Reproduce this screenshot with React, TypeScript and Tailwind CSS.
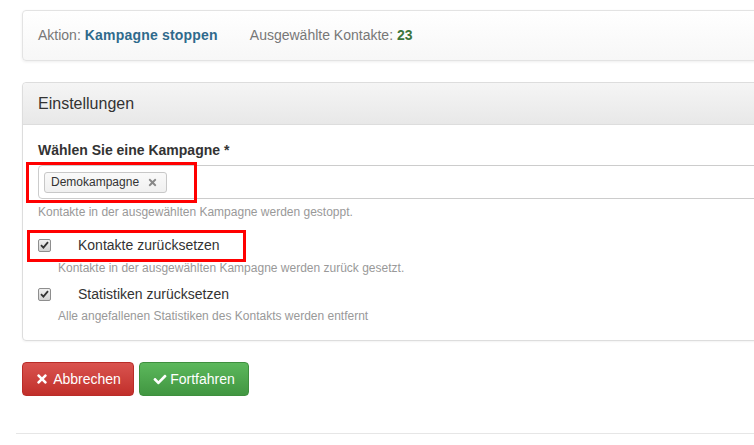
import { FaCheck, FaTimes } from "react-icons/fa";

const Checkbox: React.FC = () => (
  <span className="flex items-center justify-center w-[13px] h-[13px] rounded-[2px] border border-[#8e8e8e] bg-linear-to-b from-[#f0f0f0] to-[#d2d2d2]">
    <svg width="9" height="8" viewBox="0 0 9 8">
      <path d="M1 4.2 L3.4 6.6 L8 1.2" fill="none" stroke="#333" strokeWidth="1.8" />
    </svg>
  </span>
);

export default function App() {
  return (
    <div className="relative w-[754px] h-[445px] overflow-hidden bg-white text-[14px] text-[#333] font-['Liberation_Sans',Arial,sans-serif]">
      <div className="pt-[10px] pl-[22px] w-[1000px]">
        {/* info well */}
        <div className="h-[51px] flex items-center px-[15px] border border-[#e3e3e3] rounded-[4px] bg-linear-to-b from-white to-[#f7f7f7] shadow-[0_1px_3px_rgba(0,0,0,0.07)]">
          <span className="text-[#777]">
            Aktion: <b className="text-[#2f6a8c] tracking-[0.2px]">Kampagne stoppen</b>
          </span>
          <span className="ml-[32px] text-[#777]">
            Ausgewählte Kontakte: <b className="text-[#3c763d]">23</b>
          </span>
        </div>

        {/* settings panel */}
        <div className="mt-[21px] border border-[#ddd] rounded-[4px] shadow-[0_1px_2px_rgba(0,0,0,0.05)]">
          <div className="h-[42px] flex items-center px-[15px] text-[16px] border-b border-[#ddd] rounded-t-[4px] bg-linear-to-b from-[#f5f5f5] to-[#e8e8e8]">
            Einstellungen
          </div>
          <div className="px-[15px] pt-[15px] pb-[15px]">
            <div className="font-bold leading-[20px] mb-[5px]">Wählen Sie eine Kampagne *</div>
            <div className="h-[34px] border border-[#ccc] rounded-[4px] pl-[5px] pt-[5px]">
              <span className="inline-flex items-center h-[21px] pl-[6px] pr-[8px] gap-[8px] border border-[#c8c8c8] rounded-[3px] bg-linear-to-b from-[#fafafa] to-[#f0f0f0] text-[12px] text-[#333]">
                Demokampagne
                <FaTimes className="text-[#888] w-[11px] h-[11px]" />
              </span>
            </div>
            <div className="mt-[5px] text-[12px] leading-[17px] text-[#999]">
              Kontakte in der ausgewählten Kampagne werden gestoppt.
            </div>

            <div className="mt-[14px] flex items-center h-[20px]">
              <Checkbox />
              <span className="ml-[27px]">Kontakte zurücksetzen</span>
            </div>
            <div className="mt-[5px] pl-[20px] text-[12px] leading-[17px] text-[#999]">
              Kontakte in der ausgewählten Kampagne werden zurück gesetzt.
            </div>

            <div className="mt-[7px] flex items-center h-[20px]">
              <Checkbox />
              <span className="ml-[27px]">Statistiken zurücksetzen</span>
            </div>
            <div className="mt-[4px] pl-[20px] text-[12px] leading-[17px] text-[#999]">
              Alle angefallenen Statistiken des Kontakts werden entfernt
            </div>
          </div>
        </div>

        {/* actions */}
        <div className="mt-[21px] flex gap-[5px]">
          <button className="h-[34px] w-[112px] flex items-center justify-center gap-[4px] rounded-[4px] border border-[#b92c28] bg-linear-to-b from-[#d9534f] to-[#c12e2a] text-white text-[14px]">
            <FaTimes className="w-[14px] h-[14px]" />
            Abbrechen
          </button>
          <button className="h-[34px] w-[110px] flex items-center justify-center gap-[3px] rounded-[4px] border border-[#3e8f3e] bg-linear-to-b from-[#5cb85c] to-[#419641] text-white text-[14px]">
            <FaCheck className="w-[14px] h-[13px]" />
            Fortfahren
          </button>
        </div>
      </div>

      <div className="mt-[37px] ml-[16px] w-[900px] border-t border-[#e6e6e6]" />

      {/* red annotation boxes */}
      <div className="absolute left-[26px] top-[162px] w-[171px] h-[41px] border-[3px] border-[#ff0000]" />
      <div className="absolute left-[27px] top-[230px] w-[219px] h-[32px] border-[3px] border-[#ff0000]" />
    </div>
  );
}
